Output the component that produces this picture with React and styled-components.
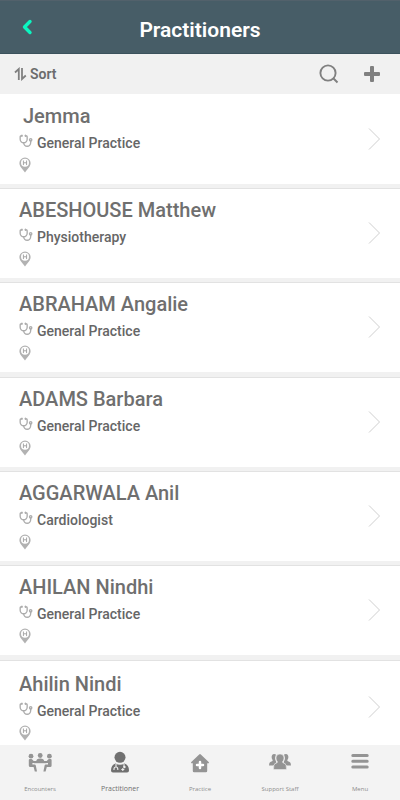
import React from "react";
import styled, { createGlobalStyle } from "styled-components";
import { Stethoscope } from "lucide-react";

const GlobalStyle = createGlobalStyle`
  * { box-sizing: border-box; }
  body { margin: 0; background: #fff; font-family: Roboto, "Liberation Sans", sans-serif; }
  button { border: 0; padding: 0; background: none; font: inherit; color: inherit; cursor: pointer; }
  svg { display: block; }
`;

const Screen = styled.div`
  display: flex;
  flex-direction: column;
  height: 100vh;
`;

const Header = styled.header`
  display: grid;
  grid-template-columns: 54px 1fr 54px;
  align-items: center;
  flex: none;
  height: 54px;
  background: #475d67;
  border-top: 1px solid #52616b;
  border-bottom: 1px solid #3b525c;
`;

const BackButton = styled.button`
  display: grid;
  place-items: center;
  height: 52px;
`;

const Title = styled.h1`
  margin: 0;
  padding-top: 6px;
  font-size: 21px;
  line-height: 24px;
  font-weight: 600;
  text-align: center;
  color: #fff;
`;

const Toolbar = styled.div`
  display: flex;
  align-items: center;
  flex: none;
  height: 40px;
  padding: 0 19px 0 14px;
  gap: 24px;
  background: #f1f1f1;
  color: #777;
`;

const SortButton = styled.button`
  display: flex;
  align-items: center;
  gap: 3px;
  margin-right: auto;
  font-size: 14px;
  line-height: 20px;
  font-weight: 600;
  color: #6c6c6c;
`;

const List = styled.ul`
  flex: 1;
  min-height: 0;
  margin: 0;
  padding: 1px 0 0;
  list-style: none;
  overflow-y: auto;
  scrollbar-width: none;
`;

const Row = styled.li`
  border-bottom: 4px solid #f1f1f1;
  box-shadow: 0 1px 0 #e2e2e2;
  margin-bottom: 1px;
  &:nth-child(3n) { border-bottom-width: 5px; }
`;

const RowButton = styled.button`
  display: flex;
  align-items: center;
  justify-content: space-between;
  width: 100%;
  padding: ${(p) => (p.$last ? "11px" : "9px")} 19px 11px;
  text-align: left;
`;

const Details = styled.span`
  display: flex;
  flex-direction: column;
`;

const Name = styled.span`
  padding-left: ${(p) => (p.$indent ? "4px" : "0")};
  font-size: 20px;
  line-height: 24px;
  font-weight: 500;
  color: #6f6f6f;
`;

const Specialty = styled.span`
  display: flex;
  gap: 4px;
  margin-top: 5px;
  font-size: 14px;
  line-height: 20px;
  font-weight: 500;
  color: #666;
  svg { margin-top: 1px; }
`;

const Location = styled.span`
  display: block;
  margin-top: 4px;
`;

const TabBar = styled.nav`
  display: grid;
  grid-template-columns: repeat(5, 1fr);
  flex: none;
  height: 55px;
  background: #f3f3f3;
`;

const Tab = styled.button`
  display: flex;
  flex-direction: column;
  align-items: center;
  gap: 8px;
  padding-top: 5px;
  font-family: "Open Sans", "Noto Sans", sans-serif;
  font-size: ${(p) => (p.$active ? "7px" : "6px")};
  line-height: 10px;
  color: ${(p) => (p.$active ? "#707070" : "#8c8c8c")};
`;

const BackIcon = () => (
  <svg width="12" height="18" viewBox="0 0 12 18" fill="none" stroke="#0cf5c0" strokeWidth="3.4" strokeLinecap="round" strokeLinejoin="round">
    <path d="M9 3.500 3.500 9 9 14.500" />
  </svg>
);

const SortIcon = () => (
  <svg width="13" height="14" viewBox="0 0 13 14" fill="none" stroke="#808080" strokeWidth="1.8">
    <path d="M4.800 13V2L1 5.500M8 1v11l3.800-3.500" />
  </svg>
);

const SearchIcon = () => (
  <svg width="20" height="20" viewBox="0 0 20 20" fill="none" stroke="#808080" strokeWidth="1.9">
    <circle cx="9" cy="9" r="7.6" />
    <path d="m14 14 4.5 4.5" />
  </svg>
);

const PlusIcon = () => (
  <svg width="18" height="18" viewBox="0 0 18 18" fill="#808080">
    <path d="M8 1h2q1 0 1 1v5h5q1 0 1 1v2q0 1-1 1h-5v5q0 1-1 1H8q-1 0-1-1v-5H2q-1 0-1-1V8q0-1 1-1h5V2q0-1 1-1z" />
  </svg>
);

const PinIcon = () => (
  <svg width="12" height="16" viewBox="0 0 12 16">
    <path fill="#b2b2b2" d="M6 .5a5.600 5.600 0 0 1 5.600 5.600C11.600 9.500 9 11.500 6 15.500 3 11.500.4 9.500.4 6.100A5.600 5.600 0 0 1 6 .5z" />
    <circle cx="6" cy="5.800" r="4" fill="#fff" />
    <path d="M4.400 3.500v4.600M7.600 3.500v4.600M4.400 5.800h3.200" stroke="#a6a6a6" fill="none" />
  </svg>
);

const NextIcon = () => (
  <svg width="14" height="24" viewBox="0 0 14 24" fill="none" stroke="#d0d0d0">
    <path d="M2 1.500 12.500 12 2 22.500" />
  </svg>
);

const EncountersIcon = () => (
  <svg width="26" height="26" viewBox="0 0 26 26" fill="#949494">
    <circle cx="4" cy="6.200" r="2.400" />
    <circle cx="13.200" cy="5.500" r="2.400" />
    <circle cx="22.400" cy="6.200" r="2.400" />
    <path d="M9.200 11.500q0-3 4-3t4 3z" />
    <path d="M7 11h12.400v2.200H7z" />
    <path d="M1.800 10q0-1 1.100-1h1.400q.800 0 1.200.8L6.700 11H8v2H5.400v1.600h2.200q1 0 1.200 1l1.200 6H7.800l-1.200-4.600H3.300q-1.500 0-1.500-1.500z" />
    <path d="M24.600 10q0-1-1.100-1h-1.400q-.800 0-1.200.8L19.700 11h-1.300v2H21v1.600h-2.200q-1 0-1.200 1l-1.200 6h2.200l1.200-4.600h3.300q1.500 0 1.500-1.500z" />
  </svg>
);

const PractitionerIcon = () => (
  <svg width="26" height="26" viewBox="0 0 26 26" fill="#707070">
    <circle cx="13" cy="7.300" r="5.500" />
    <path d="M8.500 13.600q4.500 2.400 9 0 4.500 1.500 4.500 6.900 0 2-2 2H6q-2 0-2-2 0-5.400 4.500-6.900z" />
    <path d="M9 14v3M7 20v-1q0-2 1.900-2t1.900 2v1M17 14v3" fill="none" stroke="#eee" strokeWidth="1.100" />
    <path d="M14.300 19.500h3M15.800 18v3" fill="none" stroke="#eee" strokeWidth="1.100" />
    <circle cx="17.400" cy="17" r="1.200" fill="#eee" />
  </svg>
);

const PracticeIcon = () => (
  <svg width="26" height="26" viewBox="0 0 26 26" fill="#949494">
    <path d="M12.200 4.400q.800-.700 1.600 0l7.900 7.600q.800 1.200-.700 1.200h-.800V21q0 1.300-1.300 1.300H7.100q-1.300 0-1.300-1.300v-7.800H5q-1.500 0-.700-1.200z" />
    <path d="M13 12v6M10 15h6" stroke="#fff" strokeWidth="2.500" strokeLinecap="round" />
  </svg>
);

const StaffIcon = () => (
  <svg width="26" height="26" viewBox="0 0 26 26" fill="#949494">
    <path d="M9 4.500Q5 3 4.600 7q0 2 1.200 3.300-.3 1-2 1.500Q2 12.500 2 15.500h4.500q.500-2 3-3Q7 9 9 4.500zM17 4.500q4-1.500 4.400 2.500 0 2-1.200 3.300.3 1 2 1.500 1.800.700 1.800 3.700h-4.500q-.500-2-3-3 2.500-3.500.500-8z" />
    <path d="M13 4q4 0 4 4 0 2.300-1.600 4 .300 1 2.300 1.500 1.800.500 1.800 6H6.500q0-5.500 1.800-6 2-.500 2.300-1.500Q9 10.300 9 8q0-4 4-4z" stroke="#f3f3f3" strokeWidth=".5" />
  </svg>
);

const MenuIcon = () => (
  <svg width="26" height="26" viewBox="0 0 26 26" stroke="#949494" strokeWidth="3" strokeLinecap="round">
    <path d="M5.800 5.500h14.400M5.800 11.300h14.400M5.800 17h14.400" />
  </svg>
);

const practitioners = [
  { name: "Jemma", specialty: "General Practice", indent: true },
  { name: "ABESHOUSE Matthew", specialty: "Physiotherapy" },
  { name: "ABRAHAM Angalie", specialty: "General Practice" },
  { name: "ADAMS Barbara", specialty: "General Practice" },
  { name: "AGGARWALA Anil", specialty: "Cardiologist" },
  { name: "AHILAN Nindhi", specialty: "General Practice" },
  { name: "Ahilin Nindi", specialty: "General Practice" },
];

const tabs = [
  { label: "Encounters", Icon: EncountersIcon },
  { label: "Practitioner", Icon: PractitionerIcon, active: true },
  { label: "Practice", Icon: PracticeIcon },
  { label: "Support Staff", Icon: StaffIcon },
  { label: "Menu", Icon: MenuIcon },
];

export default function App() {
  return (
    <>
      <GlobalStyle />
      <Screen>
        <Header>
          <BackButton aria-label="Back"><BackIcon /></BackButton>
          <Title>Practitioners</Title>
        </Header>
        <Toolbar>
          <SortButton><SortIcon />Sort</SortButton>
          <button aria-label="Search"><SearchIcon /></button>
          <button aria-label="Add practitioner"><PlusIcon /></button>
        </Toolbar>
        <List>
          {practitioners.map((p, i) => (
            <Row key={p.name}>
              <RowButton $last={i === practitioners.length - 1}>
                <Details>
                  <Name $indent={p.indent}>{p.name}</Name>
                  <Specialty>
                    <Stethoscope size={14} color="#adadad" strokeWidth={2.3} aria-hidden="true" />
                    {p.specialty}
                  </Specialty>
                  <Location><PinIcon /></Location>
                </Details>
                <NextIcon />
              </RowButton>
            </Row>
          ))}
        </List>
        <TabBar>
          {tabs.map(({ label, Icon, active }) => (
            <Tab key={label} $active={active} aria-current={active ? "page" : undefined}>
              <Icon />
              {label}
            </Tab>
          ))}
        </TabBar>
      </Screen>
    </>
  );
}
